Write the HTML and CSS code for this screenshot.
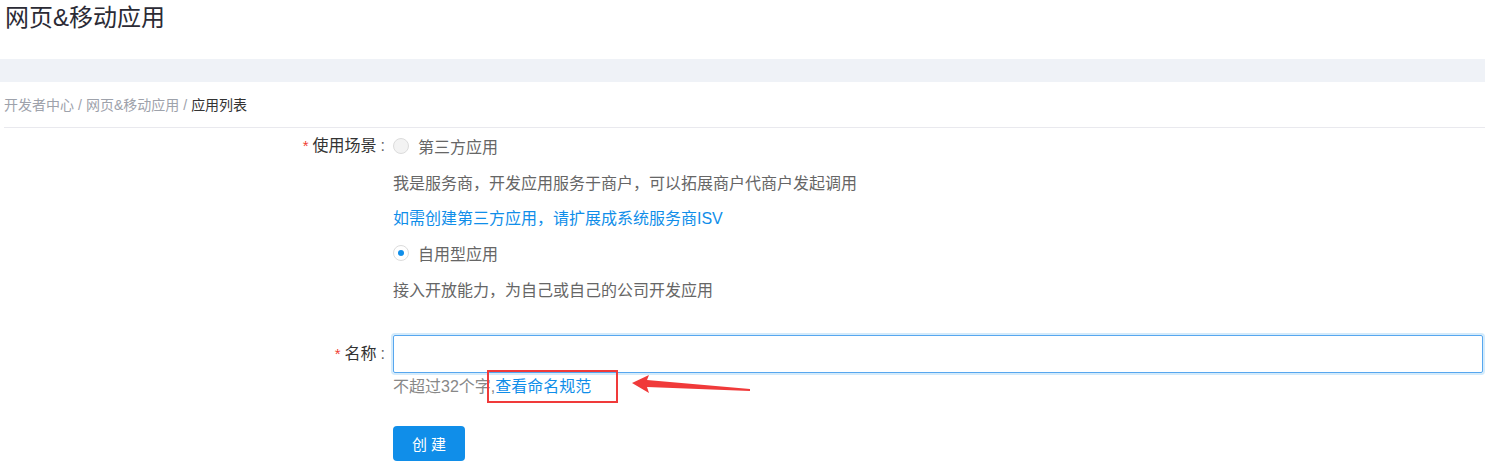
FILE: index.html
```html
<!DOCTYPE html>
<html lang="zh">
<head>
<meta charset="utf-8">
<link rel="stylesheet" href="styles.css">
</head>
<body>
<div class="page">
  <h1 class="title">网页&amp;移动应用</h1>
  <div class="band"></div>
  <div class="crumbs">
    <span class="crumb">开发者中心</span><span class="sep">/</span><span class="crumb">网页&amp;移动应用</span><span class="sep">/</span><span class="crumb current">应用列表</span>
  </div>
  <form class="form">
    <div class="row">
      <label class="label"><span class="star">*</span>使用场景<span class="colon">:</span></label>
      <div class="control">
        <div class="line"><span class="radio"></span><span class="opt">第三方应用</span></div>
        <div class="line desc">我是服务商，开发应用服务于商户，可以拓展商户代商户发起调用</div>
        <div class="line link">如需创建第三方应用，请扩展成系统服务商ISV</div>
        <div class="line"><span class="radio checked"></span><span class="opt">自用型应用</span></div>
        <div class="line desc">接入开放能力，为自己或自己的公司开发应用</div>
      </div>
    </div>
    <div class="row name-row">
      <label class="label field-label"><span class="star">*</span>名称<span class="colon">:</span></label>
      <div class="control">
        <div class="input"></div>
        <div class="hint">不超过32个字,<span class="hint-link">查看命名规范</span>
          <span class="mark"></span>
          <svg class="arrow" width="130" height="24" viewBox="0 0 130 24"><polygon points="0,8 17,0 15,5 118,14 118,16 15,12 17,18" fill="#f03a3a"/></svg>
        </div>
      </div>
    </div>
    <div class="row btn-row">
      <div></div>
      <div class="control"><button type="button" class="btn">创 建</button></div>
    </div>
  </form>
</div>
</body>
</html>
```
FILE: styles.css
```css
* { box-sizing: border-box; }
html, body { margin: 0; padding: 0; background: #fff; }
body {
  font-family: "Liberation Sans", "Noto Sans CJK SC", sans-serif;
  color: #333;
  width: 1485px;
  overflow: hidden;
}
.title {
  margin: 0;
  padding-left: 5px;
  font-size: 24px;
  font-weight: normal;
  line-height: 35px;
  height: 59px;
  color: #2b2b35;
}
.band {
  height: 23px;
  background: #eff2f7;
}
.crumbs {
  margin-left: 4px;
  height: 46px;
  padding-top: 2px;
  line-height: 43px;
  font-size: 14px;
  color: #9ea2ab;
  border-bottom: 1px solid #e9e9ee;
}
.sep { margin: 0 4px; }
.crumb.current { color: #333; }
.form { padding-top: 0; }
.row {
  display: grid;
  grid-template-columns: 385px 1fr;
  column-gap: 8px;
}
.label {
  text-align: right;
  font-size: 16px;
  line-height: 36px;
  color: #333;
}
.star {
  color: #f04134;
  font-size: 15px;
  margin-right: 4px;
  font-family: "Liberation Sans", sans-serif;
}
.colon { margin-left: 4px; color: #666; }
.control { font-size: 16px; color: #666; }
.line {
  height: 35.75px;
  display: flex;
  align-items: center;
}
.radio {
  width: 16px;
  height: 16px;
  border-radius: 50%;
  border: 1px solid #dcdcdc;
  background: #f3f3f3;
  margin-right: 9px;
  position: relative;
  flex: none;
}
.radio.checked { background: #fff; }
.radio.checked::after {
  content: "";
  position: absolute;
  left: 4px;
  top: 4px;
  width: 6px;
  height: 6px;
  border-radius: 50%;
  background: #108ee9;
}
.opt { color: #666; }
.link { color: #108ee9; }
.name-row { margin-top: 28px; }
.field-label { line-height: 38px; }
.input {
  height: 38px;
  width: 1090px;
  border: 1px solid #57a7ef;
  border-radius: 2px;
  box-shadow: 0 0 0 2px rgba(16, 142, 233, 0.18);
}
.hint {
  position: relative;
  margin-top: 2px;
  line-height: 24px;
  color: #888;
}
.hint-link { color: #108ee9; }
.mark {
  position: absolute;
  left: 94px;
  top: -5px;
  width: 131px;
  height: 33px;
  border: 2px solid #f03a3a;
}
.arrow {
  position: absolute;
  left: 239px;
  top: 0px;
}
.btn-row { margin-top: 27px; }
.btn {
  width: 72px;
  height: 35px;
  border: none;
  border-radius: 4px;
  background: #108ee9;
  color: #fff;
  font-family: "Liberation Sans", "Noto Sans CJK SC", sans-serif;
  font-size: 15px;
  padding: 0;
}
```
